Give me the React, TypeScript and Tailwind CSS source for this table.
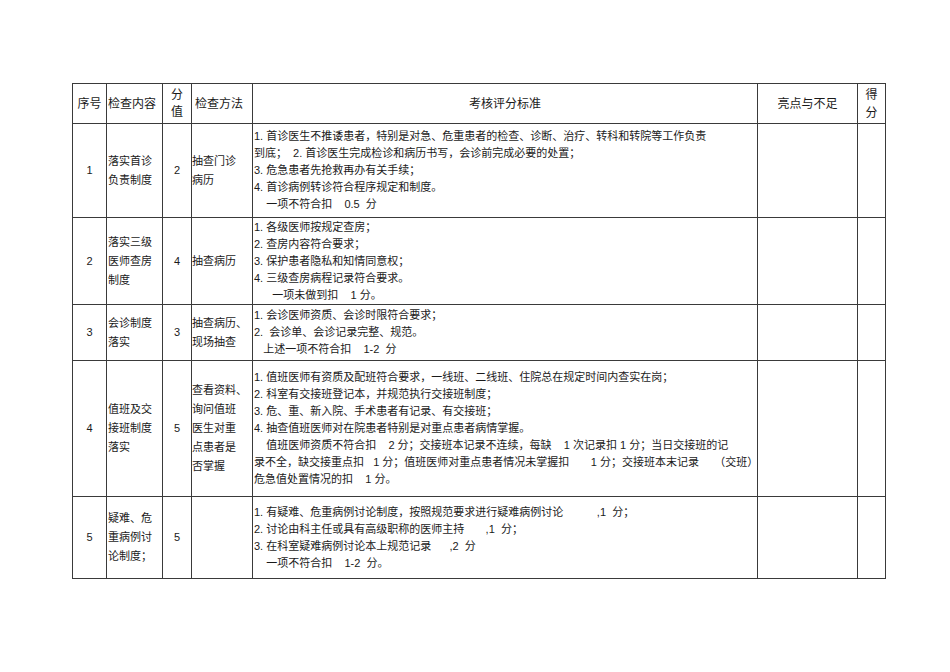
import React from 'react';

type Row = {
  no: string;
  item: string[];
  score: string;
  method: string[];
  criteria: string[];
  h: string;
};

const rows: Row[] = [
  {
    no: '1',
    item: ['落实首诊', '负责制度'],
    score: '2',
    method: ['抽查门诊', '病历'],
    criteria: [
      '1. 首诊医生不推诿患者，特别是对急、危重患者的检查、诊断、治疗、转科和转院等工作负责',
      '到底；  2. 首诊医生完成检诊和病历书写，会诊前完成必要的处置；',
      '3. 危急患者先抢救再办有关手续；',
      '4. 首诊病例转诊符合程序规定和制度。',
      '    一项不符合扣    0.5  分',
    ],
    h: 'h-[94px]',
  },
  {
    no: '2',
    item: ['落实三级', '医师查房', '制度'],
    score: '4',
    method: ['抽查病历'],
    criteria: [
      '1. 各级医师按规定查房；',
      '2. 查房内容符合要求；',
      '3. 保护患者隐私和知情同意权；',
      '4. 三级查房病程记录符合要求。',
      '      一项未做到扣    1 分。',
    ],
    h: 'h-[87px]',
  },
  {
    no: '3',
    item: ['会诊制度', '落实'],
    score: '3',
    method: ['抽查病历、', '现场抽查'],
    criteria: [
      '1. 会诊医师资质、会诊时限符合要求；',
      '2.  会诊单、会诊记录完整、规范。',
      '   上述一项不符合扣    1-2  分',
    ],
    h: 'h-[56px]',
  },
  {
    no: '4',
    item: ['值班及交', '接班制度', '落实'],
    score: '5',
    method: ['查看资料、', '询问值班', '医生对重', '点患者是', '否掌握'],
    criteria: [
      '1. 值班医师有资质及配班符合要求，一线班、二线班、住院总在规定时间内查实在岗；',
      '2. 科室有交接班登记本，并规范执行交接班制度；',
      '3. 危、重、新入院、手术患者有记录、有交接班；',
      '4. 抽查值班医师对在院患者特别是对重点患者病情掌握。',
      '    值班医师资质不符合扣    2 分；交接班本记录不连续，每缺    1 次记录扣 1 分；当日交接班的记',
      '录不全，缺交接重点扣   1 分；值班医师对重点患者情况未掌握扣       1 分；交接班本末记录     （交班）',
      '危急值处置情况的扣    1 分。',
    ],
    h: 'h-[136px]',
  },
  {
    no: '5',
    item: ['疑难、危', '重病例讨', '论制度；'],
    score: '5',
    method: [],
    criteria: [
      '1. 有疑难、危重病例讨论制度，按照规范要求进行疑难病例讨论           ,1  分；',
      '2. 讨论由科主任或具有高级职称的医师主持       ,1  分；',
      '3. 在科室疑难病例讨论本上规范记录      ,2  分',
      '    一项不符合扣    1-2  分。',
    ],
    h: 'h-[82px]',
  },
];

const cell = 'border border-[#3a3a3a] p-0';

export default function App() {
  return (
    <div className="min-h-[672px] w-[950px] bg-white pl-[72px] pt-[83px] font-['Liberation_Sans','Noto_Sans_CJK_SC',sans-serif] text-[#1a1a1a]">
      <table className="border-collapse table-fixed w-[813px] border border-[#3a3a3a]">
        <colgroup>
          <col className="w-[34px]" />
          <col className="w-[56px]" />
          <col className="w-[29px]" />
          <col className="w-[61px]" />
          <col className="w-[505px]" />
          <col className="w-[100px]" />
          <col className="w-[28px]" />
        </colgroup>
        <thead>
          <tr className="h-[40px] text-[12px]">
            <th className={`${cell} font-normal text-center`}>序号</th>
            <th className={`${cell} font-normal text-left pl-[1px]`}>检查内容</th>
            <th className={`${cell} font-normal text-center leading-[17px]`}>
              <div>分</div>
              <div>值</div>
            </th>
            <th className={`${cell} font-normal text-left pl-[3px]`}>检查方法</th>
            <th className={`${cell} font-normal text-center`}>考核评分标准</th>
            <th className={`${cell} font-normal text-center`}>亮点与不足</th>
            <th className={`${cell} font-normal text-center leading-[18px]`}>
              <div>得</div>
              <div>分</div>
            </th>
          </tr>
        </thead>
        <tbody className="text-[11px]">
          {rows.map((r) => (
            <tr key={r.no} className={r.h}>
              <td className={`${cell} text-center align-middle`}>{r.no}</td>
              <td className={`${cell} align-middle pl-[1px] leading-[19px]`}>
                {r.item.map((t) => (
                  <div key={t}>{t}</div>
                ))}
              </td>
              <td className={`${cell} text-center align-middle`}>{r.score}</td>
              <td className={`${cell} align-middle leading-[19px]`}>
                {r.method.map((t) => (
                  <div key={t}>{t}</div>
                ))}
              </td>
              <td className={`${cell} align-middle pl-[1px] leading-[17px]`}>
                {r.criteria.map((t, i) => (
                  <div key={i} className="whitespace-pre">
                    {t}
                  </div>
                ))}
              </td>
              <td className={cell}></td>
              <td className={cell}></td>
            </tr>
          ))}
        </tbody>
      </table>
    </div>
  );
}
